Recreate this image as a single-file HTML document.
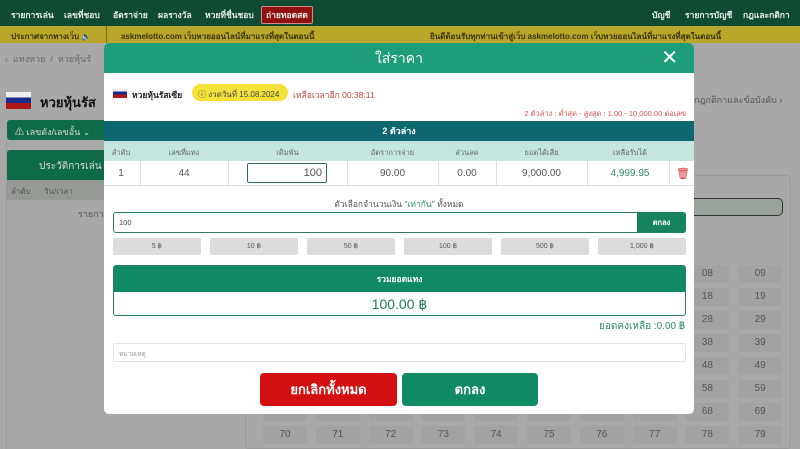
<!DOCTYPE html>
<html><head><meta charset="utf-8"><style>
*{box-sizing:border-box;margin:0;padding:0}
body{width:800px;height:449px;overflow:hidden;position:relative;background:#a8a8a8;font-family:"Liberation Sans","Noto Sans CJK SC",sans-serif;font-size:9px;color:#333}
.abs{position:absolute;white-space:nowrap}
.nav{left:0;top:0;width:800px;height:26px;background:#0f4a33;color:#e6efe9;font-weight:bold;font-size:8.5px}
.nav span{position:absolute;top:8px}
.yb{left:0;top:26px;width:800px;height:17px;background:#b9a72c;color:#3a3410;font-weight:bold;font-size:8px}
.modal{left:104px;top:43px;width:590px;height:371px;background:#fff;border-radius:5px;overflow:hidden}
.mh{left:0;top:0;width:590px;height:30px;background:#1d9e78;color:#fff;font-size:14px;text-align:center;line-height:30px}
.cell{position:absolute;text-align:center;white-space:nowrap}
.num{position:absolute;width:44px;height:18px;background:#a2a2a2;color:#555;font-size:10px;text-align:center;line-height:18px}
</style></head><body>
<div class="abs nav">
<span style="left:11px">รายการเล่น</span><span style="left:64px">เลขที่ชอบ</span><span style="left:113px">อัตราจ่าย</span><span style="left:158px">ผลรางวัล</span><span style="left:205px">หวยที่ชื่นชอบ</span>
<span style="left:261px;background:#8e1010;border:1px solid #d88;padding:1px 4px;border-radius:2px;top:6px">ถ่ายทอดสด</span>
<span style="left:652px">บัญชี</span><span style="left:685px">รายการบัญชี</span><span style="left:743px">กฎและกติกา</span>
</div>
<div class="abs yb"><span class="abs" style="left:11px;top:4px">ประกาศจากทางเว็บ 🔈</span><div class="abs" style="left:106px;top:0;width:1px;height:17px;background:#7a6d18"></div><span class="abs" style="left:121px;top:4px">askmelotto.com เว็บหวยออนไลน์ที่มาแรงที่สุดในตอนนี้</span><span class="abs" style="left:430px;top:4px">ยินดีต้อนรับทุกท่านเข้าสู่เว็บ askmelotto.com เว็บหวยออนไลน์ที่มาแรงที่สุดในตอนนี้</span></div>
<div class="abs" style="left:5px;top:52px;color:#666;font-size:9px">‹ &nbsp;แทงหวย &nbsp;/ &nbsp;หวยหุ้นรั</div>
<div class="abs" style="left:6px;top:92px;width:25px;height:17px;background:linear-gradient(#eee 0 33%,#1a2a8a 33% 66%,#b01818 66%)"></div>
<div class="abs" style="left:40px;top:92px;font-size:13px;font-weight:bold;color:#111">หวยหุ้นรัส</div>
<div class="abs" style="left:694px;top:93px;color:#555;font-size:9px">กฎกติกาและข้อบังคับ ›</div>
<div class="abs" style="left:7px;top:120px;width:100px;height:20px;background:#0f6a48;border-radius:3px;color:#ddd;font-size:9px;padding:5px 8px">⚠ เลขดัง/เลขอั้น ⌄</div>
<div class="abs" style="left:7px;top:150px;width:100px;height:30px;background:#0f6a48;border-radius:3px 3px 0 0;color:#ddd;font-size:10px;padding:9px 0 0 32px">ประวัติการเล่น</div>
<div class="abs" style="left:7px;top:180px;width:100px;height:20px;background:#969a96;color:#555;font-size:8px;padding:5px 4px">ลำดับ &nbsp;&nbsp;&nbsp;&nbsp;&nbsp;วัน/เวลา</div>
<div class="abs" style="left:78px;top:207px;color:#555;font-size:9px">รายการ</div>
<div class="abs" style="left:6px;top:140px;width:1px;height:309px;background:#999"></div>
<div class="abs" style="left:245px;top:175px;width:546px;height:274px;border:1px solid #9a9a9a;border-radius:4px"></div>
<div class="abs" style="left:600px;top:198px;width:183px;height:18px;background:#9ba39d;border:1.5px solid #333;border-radius:5px"></div>
<div id="grid"></div>
<div class="abs modal">
<div class="abs mh">ใส่ราคา<span style="position:absolute;right:16px;top:0;font-size:20px;font-weight:300">✕</span></div>
<div class="abs" style="left:9px;top:45px;width:14px;height:10px;background:linear-gradient(#eee 0 33%,#1a2a8a 33% 66%,#b01818 66%)"></div>
<div class="abs" style="left:28px;top:45px;font-weight:bold;font-size:8.5px;color:#222">หวยหุ้นรัสเซีย</div>
<div class="abs" style="left:88px;top:41px;width:96px;height:17px;background:#f5e13a;border-radius:9px;font-size:8px;color:#444;padding:4px 6px">ⓘ งวดวันที่ 15.08.2024</div>
<div class="abs" style="left:189px;top:45px;font-size:8.5px;color:#c8403c">เหลือเวลาอีก 00:38:11</div>
<div class="abs" style="right:8px;top:65px;font-size:7.5px;color:#e05050">2 ตัวล่าง : ต่ำสุด - สูงสุด : 1.00 - 10,000.00 ต่อเลข</div>
<div class="abs" style="left:0;top:78px;width:590px;height:20px;background:#0e6670;color:#fff;font-weight:bold;font-size:9px;text-align:center;line-height:20px">2 ตัวล่าง</div>
<div class="abs" style="left:0;top:98px;width:590px;height:20px;background:#c5e6df"></div>
<div class="abs" style="left:0;top:118px;width:590px;height:25px;border-bottom:1px solid #ddd"></div>
<div class="cell" style="left:2px;top:104px;width:30px;font-size:7.5px;color:#666">ลำดับ</div>
<div class="cell" style="left:36px;top:104px;width:88px;font-size:7.5px;color:#666">เลขที่แทง</div>
<div class="cell" style="left:124px;top:104px;width:119px;font-size:7.5px;color:#666">เดิมพัน</div>
<div class="cell" style="left:243px;top:104px;width:91px;font-size:7.5px;color:#666">อัตราการจ่าย</div>
<div class="cell" style="left:334px;top:104px;width:58px;font-size:7.5px;color:#666">ส่วนลด</div>
<div class="cell" style="left:392px;top:104px;width:91px;font-size:7.5px;color:#666">ยอดได้เสีย</div>
<div class="cell" style="left:483px;top:104px;width:86px;font-size:7.5px;color:#666">เหลือรับได้</div>
<div class="cell" style="left:2px;top:125px;width:30px;font-size:10px;color:#555">1</div>
<div class="cell" style="left:36px;top:125px;width:88px;font-size:10px;color:#555">44</div>
<div class="abs" style="left:143px;top:120px;width:80px;height:20px;border:1.5px solid #2e6a60;border-radius:2px;text-align:right;padding:3px 4px;font-size:11px;color:#555">100</div>
<div class="cell" style="left:243px;top:125px;width:91px;font-size:10px;color:#555">90.00</div>
<div class="cell" style="left:334px;top:125px;width:58px;font-size:10px;color:#555">0.00</div>
<div class="cell" style="left:392px;top:125px;width:91px;font-size:10px;color:#555">9,000.00</div>
<div class="cell" style="left:483px;top:125px;width:86px;font-size:10px;color:#2f8a6a">4,999.95</div>
<div class="cell" style="left:572px;top:124px;width:14px;font-size:11px;color:#d03030">🗑</div>
<div class="abs" style="left:36px;top:118px;width:1px;height:25px;background:#ddd"></div>
<div class="abs" style="left:124px;top:118px;width:1px;height:25px;background:#ddd"></div>
<div class="abs" style="left:243px;top:118px;width:1px;height:25px;background:#ddd"></div>
<div class="abs" style="left:334px;top:118px;width:1px;height:25px;background:#ddd"></div>
<div class="abs" style="left:392px;top:118px;width:1px;height:25px;background:#ddd"></div>
<div class="abs" style="left:483px;top:118px;width:1px;height:25px;background:#ddd"></div>
<div class="abs" style="left:565px;top:118px;width:1px;height:25px;background:#ddd"></div>
<div class="cell" style="left:0;top:154px;width:590px;font-size:8.5px;color:#555">ตัวเลือกจำนวนเงิน <span style="color:#2f8a6a">"เท่ากัน"</span> ทั้งหมด</div>
<div class="abs" style="left:9px;top:169px;width:573px;height:21px;border:1px solid #2e7a68;border-radius:3px;font-size:7.5px;padding:5px 5px;color:#444">100</div>
<div class="abs" style="left:533px;top:169px;width:49px;height:21px;background:#16855f;border-radius:0 3px 3px 0;color:#fff;font-size:7.5px;text-align:center;line-height:21px;font-weight:bold">ตกลง</div>
<div id="amts"></div>
<div class="abs" style="left:9px;top:222px;width:573px;height:51px;border:1px solid #2e7a68;border-radius:3px;overflow:hidden">
<div style="height:26px;background:#0f8a62;color:#fff;font-weight:bold;font-size:8.5px;text-align:center;line-height:26px">รวมยอดแทง</div>
<div style="text-align:center;font-size:14px;color:#1e7a5c;line-height:24px">100.00 ฿</div></div>
<div class="abs" style="right:9px;top:276px;font-size:10px;color:#2f8a6a">ยอดคงเหลือ :0.00 ฿</div>
<div class="abs" style="left:9px;top:300px;width:573px;height:19px;border:1px solid #e4e4e4;border-radius:2px;font-size:6.5px;color:#999;padding:5px 5px">หมายเหตุ</div>
<div class="abs" style="left:156px;top:330px;width:137px;height:33px;background:#d40f12;border-radius:4px;color:#fff;font-weight:bold;font-size:13px;text-align:center;line-height:33px">ยกเลิกทั้งหมด</div>
<div class="abs" style="left:298px;top:330px;width:136px;height:33px;background:#0f8a62;border-radius:4px;color:#fff;font-weight:bold;font-size:13px;text-align:center;line-height:33px">ตกลง</div>
</div>
<script>
var a=["5 ฿","10 ฿","50 ฿","100 ฿","500 ฿","1,000 ฿"],h="";
for(var i=0;i<6;i++)h+='<div class="abs" style="left:'+(9+i*97)+'px;top:195px;width:88px;height:17px;background:#dcdcdc;border-radius:2px;font-size:7px;color:#555;text-align:center;line-height:17px">'+a[i]+'</div>';
document.getElementById("amts").outerHTML=h;
var g="";
for(var r=0;r<8;r++)for(var c=0;c<10;c++){var x=263+c*52.8,y=265+r*23;g+='<div class="num" style="left:'+x+'px;top:'+y+'px">'+r+c+'</div>';}
document.getElementById("grid").outerHTML=g;
</script>
</body></html>
